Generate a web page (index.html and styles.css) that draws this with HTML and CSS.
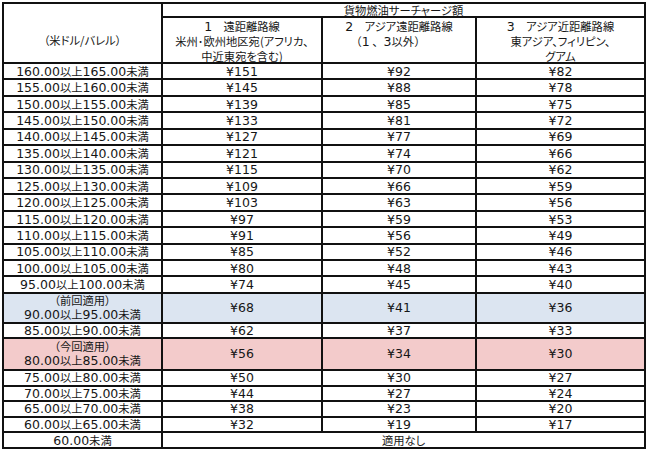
FILE: index.html
```html
<!DOCTYPE html>
<html lang="ja">
<head>
<meta charset="utf-8">
<title>貨物燃油サーチャージ額</title>
<link rel="stylesheet" href="styles.css">
</head>
<body>
<div class="wrap">
<table class="sc">
  <colgroup>
    <col class="c1"><col class="c2"><col class="c3"><col class="c4">
  </colgroup>
  <thead>
    <tr class="h1">
      <th class="unit" rowspan="2">（米ドル/バレル）</th>
      <th colspan="3">貨物燃油サーチャージ額</th>
    </tr>
    <tr class="h2">
      <th class="top"><div class="hd"><span class="n">1</span>　遠距離路線<br>米州･欧州地区宛(アフリカ、<br>中近東宛を含む)</div></th>
      <th class="top"><div class="hd"><span class="n">2</span>　アジア遠距離路線<br><span class="fw">（<span class="n">1</span> 、<span class="n">3</span>以外）</span></div></th>
      <th class="top"><div class="hd"><span class="n">3</span>　アジア近距離路線<br>東アジア、フィリピン、<br>グアム</div></th>
    </tr>
  </thead>
  <tbody>
    <tr class="ra"><td>160.00<span class="j">以上</span>165.00<span class="j">未満</span></td><td>¥151</td><td>¥92</td><td>¥82</td></tr>
    <tr class="ra"><td>155.00<span class="j">以上</span>160.00<span class="j">未満</span></td><td>¥145</td><td>¥88</td><td>¥78</td></tr>
    <tr class="ra"><td>150.00<span class="j">以上</span>155.00<span class="j">未満</span></td><td>¥139</td><td>¥85</td><td>¥75</td></tr>
    <tr class="ra"><td>145.00<span class="j">以上</span>150.00<span class="j">未満</span></td><td>¥133</td><td>¥81</td><td>¥72</td></tr>
    <tr class="ra"><td>140.00<span class="j">以上</span>145.00<span class="j">未満</span></td><td>¥127</td><td>¥77</td><td>¥69</td></tr>
    <tr class="ra"><td>135.00<span class="j">以上</span>140.00<span class="j">未満</span></td><td>¥121</td><td>¥74</td><td>¥66</td></tr>
    <tr class="ra"><td>130.00<span class="j">以上</span>135.00<span class="j">未満</span></td><td>¥115</td><td>¥70</td><td>¥62</td></tr>
    <tr class="ra"><td>125.00<span class="j">以上</span>130.00<span class="j">未満</span></td><td>¥109</td><td>¥66</td><td>¥59</td></tr>
    <tr class="ra"><td>120.00<span class="j">以上</span>125.00<span class="j">未満</span></td><td>¥103</td><td>¥63</td><td>¥56</td></tr>
    <tr class="ra"><td>115.00<span class="j">以上</span>120.00<span class="j">未満</span></td><td>¥97</td><td>¥59</td><td>¥53</td></tr>
    <tr class="ra"><td>110.00<span class="j">以上</span>115.00<span class="j">未満</span></td><td>¥91</td><td>¥56</td><td>¥49</td></tr>
    <tr class="ra"><td>105.00<span class="j">以上</span>110.00<span class="j">未満</span></td><td>¥85</td><td>¥52</td><td>¥46</td></tr>
    <tr class="ra"><td>100.00<span class="j">以上</span>105.00<span class="j">未満</span></td><td>¥80</td><td>¥48</td><td>¥43</td></tr>
    <tr class="ra"><td>95.00<span class="j">以上</span>100.00<span class="j">未満</span></td><td>¥74</td><td>¥45</td><td>¥40</td></tr>
    <tr class="prev"><td><span class="j">（前回適用）</span><br>90.00<span class="j">以上</span>95.00<span class="j">未満</span></td><td>¥68</td><td>¥41</td><td>¥36</td></tr>
    <tr class="rs"><td>85.00<span class="j">以上</span>90.00<span class="j">未満</span></td><td>¥62</td><td>¥37</td><td>¥33</td></tr>
    <tr class="cur"><td><span class="j">（今回適用）</span><br>80.00<span class="j">以上</span>85.00<span class="j">未満</span></td><td>¥56</td><td>¥34</td><td>¥30</td></tr>
    <tr class="rb"><td>75.00<span class="j">以上</span>80.00<span class="j">未満</span></td><td>¥50</td><td>¥30</td><td>¥27</td></tr>
    <tr class="rb"><td>70.00<span class="j">以上</span>75.00<span class="j">未満</span></td><td>¥44</td><td>¥27</td><td>¥24</td></tr>
    <tr class="rb"><td>65.00<span class="j">以上</span>70.00<span class="j">未満</span></td><td>¥38</td><td>¥23</td><td>¥20</td></tr>
    <tr class="rb"><td>60.00<span class="j">以上</span>65.00<span class="j">未満</span></td><td>¥32</td><td>¥19</td><td>¥17</td></tr>
    <tr class="rb"><td>60.00<span class="j">未満</span></td><td colspan="3"><span class="j">適用なし</span></td></tr>
  </tbody>
</table>
</div>
</body>
</html>
```
FILE: styles.css
```css
html, body {
  margin: 0;
  padding: 0;
  background: #ffffff;
}
.wrap {
  padding: 2px 0 0 2px;
}
.sc {
  border-collapse: collapse;
  table-layout: fixed;
  width: 642px;
  color: #161616;
}
.c1 { width: 159px; }
.c2 { width: 160px; }
.c3 { width: 154px; }
.c4 { width: 169px; }
.sc th, .sc td {
  border: 2px solid #111;
  padding: 0;
  text-align: center;
  vertical-align: middle;
  font-weight: normal;
  white-space: nowrap;
}
.sc th {
  font-family: "Noto Sans CJK JP", sans-serif;
  font-size: 11.3px;
  font-feature-settings: "palt";
  line-height: 16px;
}
.sc th.top {
  vertical-align: top;
}
.hd {
  height: 43px;
  padding-top: 1px;
  line-height: 15px;
}
.sc th.unit {
  padding-top: 14px;
}
.fw {
  font-feature-settings: normal;
  padding-right: 22px;
}
.h1 { height: 14px; }
.h1 th { line-height: 10px; }
.h2 { height: 46px; }
.n {
  font-family: "DejaVu Sans", sans-serif;
  font-size: 12.5px;
  line-height: 10px;
}
.sc td {
  font-family: "DejaVu Sans", "Noto Sans CJK JP", sans-serif;
  font-size: 12.5px;
  line-height: 11px;
}
.j {
  font-family: "Noto Sans CJK JP", sans-serif;
  font-size: 11.3px;
  font-feature-settings: "palt";
  line-height: 11px;
}
.ra { height: 16.43px; }
.prev { height: 30px; }
.prev td, .cur td { line-height: 14px; }
.prev .j, .cur .j { line-height: 11px; }
.rs { height: 15px; }
.cur { height: 32px; }
.rb { height: 15.6px; }
.prev td { background: #dce5f1; }
.cur td { background: #f3cbcb; }
```
